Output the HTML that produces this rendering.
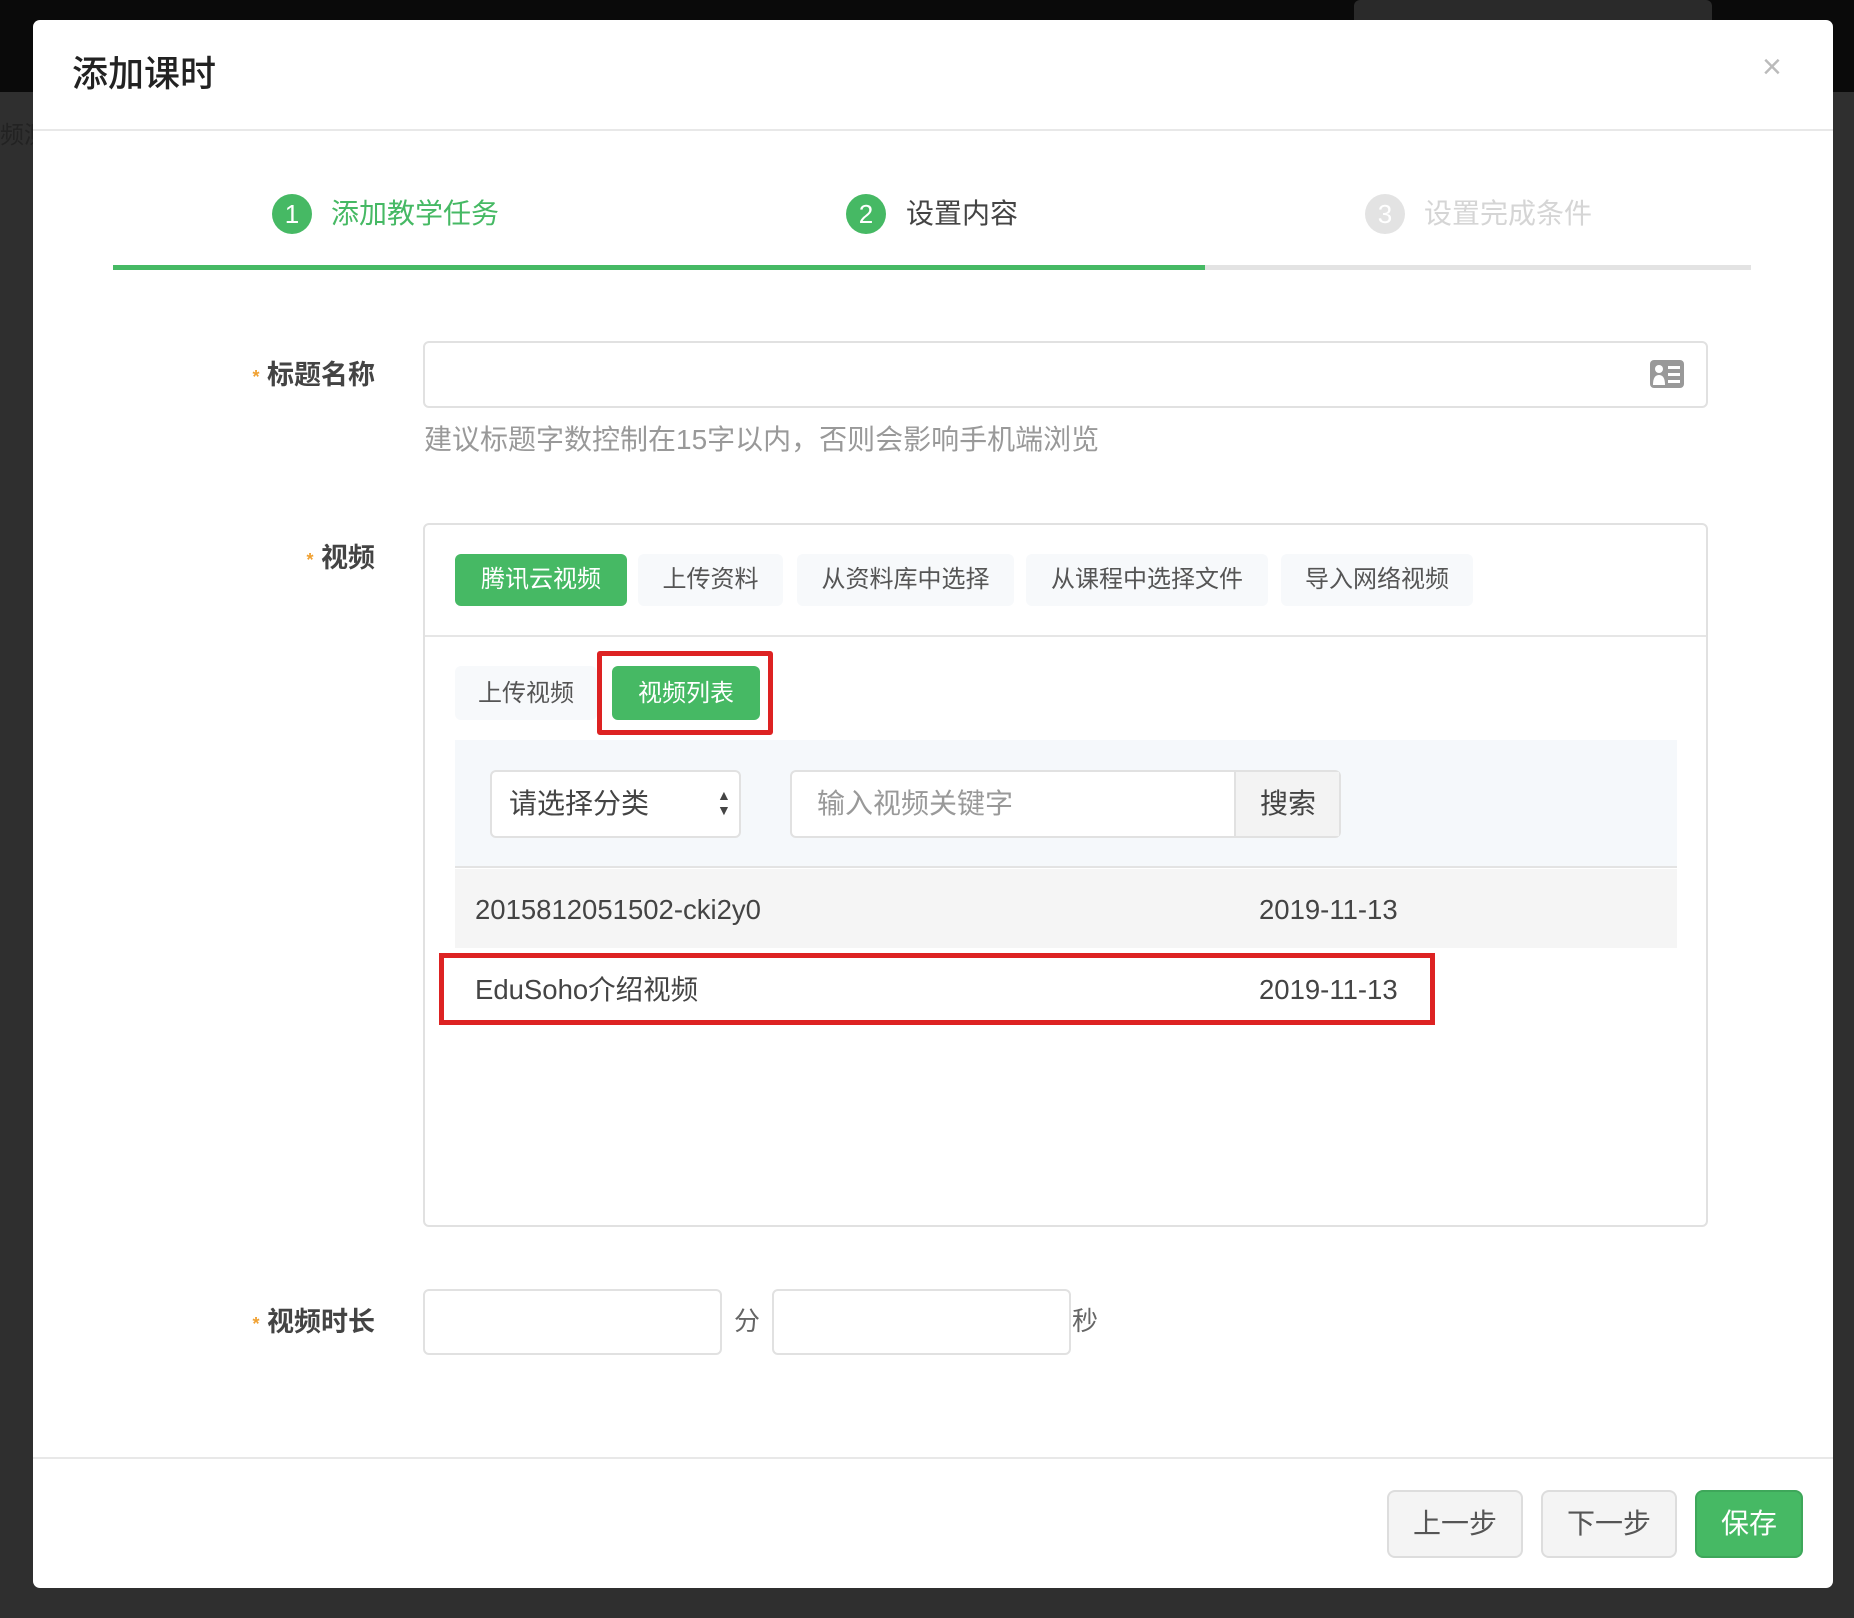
<!DOCTYPE html>
<html><head><meta charset="utf-8"><style>
*{box-sizing:border-box;margin:0;padding:0}
body{width:1854px;height:1618px;background:#2f2f2f;position:relative;overflow:hidden;font-family:"Liberation Sans","Noto Sans CJK SC",sans-serif;color:#333}
.a{position:absolute}
.topbar{left:0;top:0;width:1854px;height:92px;background:#0a0a0a}
.modal{left:33px;top:20px;width:1800px;height:1568px;background:#fff;border-radius:7px}
.t{white-space:nowrap;line-height:1}
.circ{width:40px;height:40px;border-radius:50%;color:#fff;font-size:26px;text-align:center;line-height:40px}
.inp{border:2px solid #e1e1e1;border-radius:6px;background:#fff}
.tab{height:52px;border-radius:6px;background:#f7f9fb;font-size:24px;color:#555;text-align:center;line-height:52px}
.btn{border:2px solid #ddd;border-radius:8px;background:#f4f4f4;font-size:28px;color:#555;text-align:center}
.lbl{font-size:27px;font-weight:bold;color:#444;width:135px;text-align:right;left:240px}
</style></head><body>
<div class="a topbar"></div>
<div class="a" style="left:1354px;top:0;width:358px;height:20px;background:#2a2a2a;border-radius:6px 6px 0 0"></div>
<div class="a t" style="left:0;top:124px;font-size:24px;color:#222">频测</div>
<div class="a modal"></div>
<div class="a t" style="left:72px;top:56px;font-size:36px;color:#222;font-weight:500">添加课时</div>
<div class="a t" style="left:1762px;top:50px;font-size:34px;color:#bbb">×</div>
<div class="a" style="left:33px;top:129px;width:1800px;height:2px;background:#e8e8e8"></div>

<div class="a circ" style="left:272px;top:194px;background:#46b964">1</div>
<div class="a t" style="left:331px;top:200px;font-size:28px;color:#46b964">添加教学任务</div>
<div class="a circ" style="left:846px;top:194px;background:#46b964">2</div>
<div class="a t" style="left:906px;top:200px;font-size:28px;color:#444">设置内容</div>
<div class="a circ" style="left:1365px;top:194px;background:#e3e3e3">3</div>
<div class="a t" style="left:1424px;top:200px;font-size:28px;color:#d5d5d5">设置完成条件</div>
<div class="a" style="left:113px;top:265px;width:1638px;height:5px;background:#e3e3e3"></div>
<div class="a" style="left:113px;top:265px;width:1092px;height:5px;background:#46b964"></div>

<div class="a t lbl" style="top:362px"><span style="color:#f0a030;font-size:18px;vertical-align:middle">*</span> 标题名称</div>
<div class="a inp" style="left:423px;top:341px;width:1285px;height:67px"></div>
<svg class="a" style="left:1650px;top:360px" width="34" height="28" viewBox="0 0 34 28"><rect width="34" height="28" rx="4" fill="#999"/><circle cx="9" cy="9" r="4" fill="#fff"/><path d="M3 25 Q3 15 9 15 Q15 15 15 25Z" fill="#fff"/><rect x="18" y="6" width="12" height="3" fill="#fff"/><rect x="18" y="13" width="12" height="3" fill="#fff"/><rect x="18" y="20" width="12" height="3" fill="#fff"/></svg>
<div class="a t" style="left:424px;top:426px;font-size:28px;color:#999">建议标题字数控制在15字以内，否则会影响手机端浏览</div>

<div class="a t lbl" style="top:545px"><span style="color:#f0a030;font-size:18px;vertical-align:middle">*</span> 视频</div>
<div class="a inp" style="left:423px;top:523px;width:1285px;height:704px"></div>
<div class="a" style="left:425px;top:635px;width:1281px;height:2px;background:#e6e6e6"></div>
<div class="a tab" style="left:455px;top:554px;width:172px;background:#46b964;color:#fff">腾讯云视频</div>
<div class="a tab" style="left:638px;top:554px;width:145px">上传资料</div>
<div class="a tab" style="left:797px;top:554px;width:217px">从资料库中选择</div>
<div class="a tab" style="left:1026px;top:554px;width:242px">从课程中选择文件</div>
<div class="a tab" style="left:1281px;top:554px;width:192px">导入网络视频</div>

<div class="a tab" style="left:455px;top:666px;width:142px;height:54px;line-height:56px">上传视频</div>
<div class="a tab" style="left:612px;top:666px;width:148px;height:54px;line-height:56px;background:#46b964;color:#fff">视频列表</div>
<div class="a" style="left:597px;top:651px;width:176px;height:84px;border:5px solid #dd2222;border-radius:3px"></div>

<div class="a" style="left:455px;top:740px;width:1222px;height:128px;background:#f5f8fb;border-bottom:2px solid #e3e3e3"></div>
<div class="a inp" style="left:490px;top:770px;width:251px;height:68px"></div>
<div class="a t" style="left:509px;top:790px;font-size:28px;color:#444">请选择分类</div>
<div class="a t" style="left:717px;top:788px;font-size:14px;color:#444;line-height:15px">▲<br>▼</div>
<div class="a inp" style="left:790px;top:770px;width:551px;height:68px"></div>
<div class="a" style="left:1234px;top:772px;width:105px;height:64px;background:#f3f3f3;border-left:2px solid #e1e1e1"></div>
<div class="a t" style="left:817px;top:790px;font-size:28px;color:#999">输入视频关键字</div>
<div class="a t" style="left:1260px;top:790px;font-size:28px;color:#444">搜索</div>

<div class="a" style="left:455px;top:869px;width:1222px;height:79px;background:#f5f5f5"></div>
<div class="a t" style="left:475px;top:896px;font-size:27.5px;color:#444">2015812051502-cki2y0</div>
<div class="a t" style="left:1259px;top:896px;font-size:27.5px;color:#444">2019-11-13</div>
<div class="a t" style="left:475px;top:976px;font-size:27.5px;color:#444">EduSoho介绍视频</div>
<div class="a t" style="left:1259px;top:976px;font-size:27.5px;color:#444">2019-11-13</div>
<div class="a" style="left:439px;top:953px;width:996px;height:72px;border:5px solid #dd2222"></div>

<div class="a t lbl" style="top:1309px"><span style="color:#f0a030;font-size:18px;vertical-align:middle">*</span> 视频时长</div>
<div class="a inp" style="left:423px;top:1289px;width:299px;height:66px"></div>
<div class="a t" style="left:734px;top:1308px;font-size:26px;color:#666">分</div>
<div class="a inp" style="left:772px;top:1289px;width:299px;height:66px"></div>
<div class="a t" style="left:1072px;top:1308px;font-size:26px;color:#666">秒</div>

<div class="a" style="left:33px;top:1457px;width:1800px;height:2px;background:#e8e8e8"></div>
<div class="a btn" style="left:1387px;top:1490px;width:136px;height:68px;line-height:64px">上一步</div>
<div class="a btn" style="left:1541px;top:1490px;width:136px;height:68px;line-height:64px">下一步</div>
<div class="a btn" style="left:1695px;top:1490px;width:108px;height:68px;line-height:64px;background:#46b964;border-color:#3ea75a;color:#fff">保存</div>
</body></html>
